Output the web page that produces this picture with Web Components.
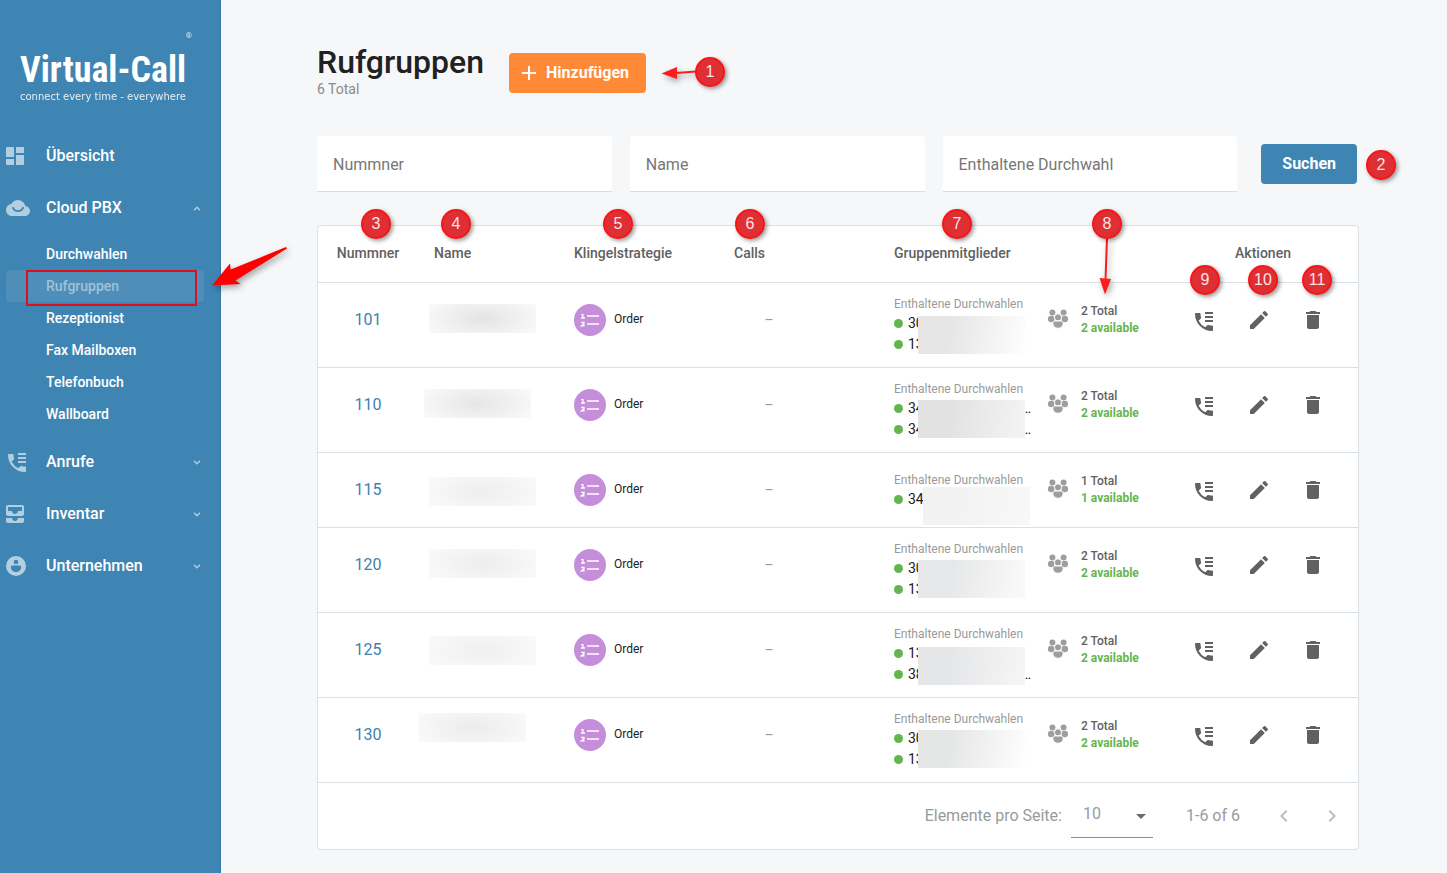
<!DOCTYPE html>
<html lang="de">
<head>
<meta charset="utf-8">
<meta name="viewport" content="width=device-width, initial-scale=1">
<title>Rufgruppen</title>
<style>
	body {
		margin: 0;
		font-family: Roboto, "Liberation Sans", sans-serif;
		background: #f5f7f9;
		color: #212121;
	}
</style>
</head>
<body>
<pbx-app>
	<pbx-sidebar slot="side">
		<nav-item icon="dashboard">Übersicht</nav-item>
		<nav-item icon="cloud" open>Cloud PBX
			<nav-link slot="sub">Durchwahlen</nav-link>
			<nav-link slot="sub" active>Rufgruppen</nav-link>
			<nav-link slot="sub">Rezeptionist</nav-link>
			<nav-link slot="sub">Fax Mailboxen</nav-link>
			<nav-link slot="sub">Telefonbuch</nav-link>
			<nav-link slot="sub">Wallboard</nav-link>
		</nav-item>
		<nav-item icon="phone" closed>Anrufe</nav-item>
		<nav-item icon="inbox" closed>Inventar</nav-item>
		<nav-item icon="account" closed>Unternehmen</nav-item>
	</pbx-sidebar>
	<page-header total="6 Total">Rufgruppen</page-header>
	<search-bar>
		<search-field>Nummner</search-field>
		<search-field>Name</search-field>
		<search-field>Enthaltene Durchwahl</search-field>
	</search-bar>
	<group-table></group-table>
	<note-layer slot="notes">
		<note-badge x="710" y="72">1</note-badge>
		<note-badge x="1381" y="165">2</note-badge>
		<note-badge x="376" y="224">3</note-badge>
		<note-badge x="456" y="224">4</note-badge>
		<note-badge x="618" y="224">5</note-badge>
		<note-badge x="750" y="224">6</note-badge>
		<note-badge x="957" y="224">7</note-badge>
		<note-badge x="1107" y="224">8</note-badge>
		<note-badge x="1205" y="280">9</note-badge>
		<note-badge x="1263" y="280">10</note-badge>
		<note-badge x="1317" y="280">11</note-badge>
	</note-layer>
</pbx-app>

<script>
const PHONE = `
	<path d="M20 15.5c-1.25 0-2.45-.2-3.57-.57a1.02 1.02 0 0 0-1.02.24l-2.2 2.2a15.05 15.05 0 0 1-6.59-6.59l2.2-2.21c.28-.26.36-.65.25-1A11.4 11.4 0 0 1 8.5 4c0-.55-.45-1-1-1H4c-.55 0-1 .45-1 1 0 9.39 7.61 17 17 17 .55 0 1-.45 1-1v-3.5c0-.55-.45-1-1-1z"/>
	<path d="M13 2h8v2h-8zM13 6h8v2h-8zM13 10h8v2h-8z"/>`;

// name: [viewBox x, y, width, height, shapes]
const ICONS = {
	dashboard: [3, 3, 18, 18, `<path d="M4 3h6a1 1 0 0 1 1 1v9H3V4a1 1 0 0 1 1-1zM3 15h8v6H4a1 1 0 0 1-1-1zM13 3h7a1 1 0 0 1 1 1v5h-8zM13 11h8v9a1 1 0 0 1-1 1h-7z"/>`],
	cloud: [0, 0, 24, 24, `
		<path d="M19.35 10.04A7.49 7.49 0 0 0 12 4C9.11 4 6.6 5.64 5.35 8.04A5.994 5.994 0 0 0 0 14c0 3.31 2.69 6 6 6h13c2.76 0 5-2.24 5-5 0-2.64-2.05-4.78-4.65-4.96z"/>
		<path d="M6.2 12h1.6M16.2 12h1.6M7.4 12.4c1.7 3.600 7.500 3.600 9.200 0" fill="none" stroke="#3f85b3" stroke-width="1.8"/>
		<circle cx="9.2" cy="11.6" r="1"/><circle cx="14.8" cy="11.6" r="1"/>`],
	phone: [1, 1, 20, 21, PHONE],
	call: [1, -2, 24, 24, PHONE],
	inbox: [3, 3, 18, 18, `<path d="M19 3H5c-1.1 0-2 .9-2 2v7c0 1.1.9 2 2 2h14c1.1 0 2-.9 2-2V5c0-1.1-.9-2-2-2zm0 6h-4c0 1.62-1.38 3-3 3s-3-1.38-3-3H5V5h14v4zm-4 7h6v3c0 1.1-.9 2-2 2H5c-1.1 0-2-.9-2-2v-3h6c0 1.66 1.34 3 3 3s3-1.34 3-3z"/>`],
	account: [2, 2, 20, 20, `
		<circle cx="12" cy="12" r="10"/>
		<g fill="#3f85b3"><circle cx="12" cy="8" r="2.3"/><path d="M8.5 11.5h7c1 0 1.6.7 1.6 1.7a5.1 5.1 0 0 1-10.2 0c0-1 .6-1.7 1.6-1.7z"/></g>`],
	down: [0, 0, 8, 5, `<path d="M1 .8l3 3 3-3" fill="none" stroke="currentColor" stroke-width="1.4"/>`],
	up: [0, 0, 8, 5, `<path d="M1 4.2l3-3 3 3" fill="none" stroke="currentColor" stroke-width="1.4"/>`],
	plus: [5, 5, 14, 14, `<path d="M19 13h-6v6h-2v-6H5v-2h6V5h2v6h6z"/>`],
	edit: [0, 0, 24, 24, `<path d="M3 17.25V21h3.75L17.81 9.94l-3.75-3.75L3 17.25zM20.71 7.04a1 1 0 0 0 0-1.41l-2.34-2.34a1 1 0 0 0-1.41 0l-1.83 1.83 3.75 3.75 1.83-1.83z"/>`],
	trash: [0, 0, 24, 24, `<path d="M6 19c0 1.1.9 2 2 2h8c1.1 0 2-.9 2-2V7H6v12zM19 4h-3.5l-1-1h-5l-1 1H5v2h14V4z"/>`],
	people: [0, 1, 20, 20, `
		<circle cx="4.4" cy="3.4" r="3"/><circle cx="15.6" cy="3.4" r="3"/>
		<circle cx="3.2" cy="10" r="3.3"/><circle cx="16.8" cy="10" r="3.3"/>
		<g stroke="#fff"><circle cx="10" cy="8.4" r="3.6"/><path d="M7.4 12h5.2c1.6 0 2.6 1 2.6 2.3 0 3-2.2 5-5.2 5s-5.2-2-5.2-5c0-1.3 1-2.3 2.6-2.3z"/></g>`],
	prev: [8, 6, 8, 12, `<path d="M15.41 7.41L14 6l-6 6 6 6 1.41-1.41L10.83 12z"/>`],
	next: [8, 6, 8, 12, `<path d="M10 6L8.59 7.41 13.17 12l-4.58 4.59L10 18l6-6z"/>`]
};

function icon(name) {
	const [x, y, w, h, body] = ICONS[name];
	return `<svg width="${w}" height="${h}" viewBox="${x} ${y} ${w} ${h}" fill="currentColor" overflow="visible" aria-hidden="true">${body}</svg>`;
}

function shadow(el, html) {
	el.attachShadow({ mode: "open" }).innerHTML = html;
}

class PbxApp extends HTMLElement {
	constructor() {
		super();
		shadow(this, `
			<style>
				:host { display: grid; grid-template-columns: 221px 1fr; min-height: 100vh; position: relative; }
				main { padding: 43px 88px 23px 96px; min-width: 0; }
			</style>
			<slot name="side"></slot>
			<main><slot></slot></main>
			<slot name="notes"></slot>
		`);
	}
}

// =========================
// SIDEBAR
// =========================

class PbxSidebar extends HTMLElement {
	constructor() {
		super();
		shadow(this, `
			<style>
				:host { display: block; box-sizing: border-box; background: #3f85b3; border-right: 1px solid #3479a8; color: #fff; }
				.logo { display: grid; height: 130px; padding: 30px 28px 0 20px; box-sizing: border-box; align-content: start; }
				.reg { justify-self: end; font-size: 8px; line-height: 12px; opacity: .8; }
				.name { font: bold 36px/42px "Roboto Condensed", "Liberation Sans Narrow", "DejaVu Sans Condensed", sans-serif; white-space: nowrap; padding-top: 7px; }
				.claim { font: 10px/12px "DejaVu Sans", sans-serif; white-space: nowrap; opacity: .85; }
			</style>
			<div class="logo">
				<span class="reg">®</span>
				<span class="name">Virtual-Call</span>
				<span class="claim">connect every time - everywhere</span>
			</div>
			<nav><slot></slot></nav>
		`);
	}
}

class NavItem extends HTMLElement {
	constructor() {
		super();
		const open = this.hasAttribute("open");
		const arrow = open ? icon("up") : this.hasAttribute("closed") ? icon("down") : "";
		shadow(this, `
			<style>
				:host { display: block; }
				button {
					display: flex; align-items: center; width: 100%; height: 52px;
					padding: 0 19px 0 6px; border: 0; background: none;
					color: inherit; font: 500 16px/20px Roboto, sans-serif; text-align: left; cursor: pointer;
				}
				.icon { display: flex; flex: 0 0 40px; color: #b2cfe2; }
				.label { flex: 1; }
				.arrow { display: flex; padding-top: 1px; color: #b2cfe2; }
				.sub { padding: 4px 16px 6px 6px; }
			</style>
			<button type="button">
				<span class="icon">${icon(this.getAttribute("icon"))}</span>
				<span class="label"><slot></slot></span>
				<span class="arrow">${arrow}</span>
			</button>
			${open ? `<div class="sub"><slot name="sub"></slot></div>` : ""}
		`);
	}
}

class NavLink extends HTMLElement {
	constructor() {
		super();
		shadow(this, `
			<style>
				:host { display: block; }
				a { display: block; padding-left: 40px; border-radius: 4px; font-size: 14px; font-weight: 500; line-height: 32px; color: #fff; text-decoration: none; }
				:host([active]) a { background: rgba(255, 255, 255, .08); color: #a0c2da; }
			</style>
			<a href="#"><slot></slot></a>
		`);
	}
}

// =========================
// HEADER + SEARCH
// =========================

class PageHeader extends HTMLElement {
	constructor() {
		super();
		shadow(this, `
			<style>
				:host { display: flex; align-items: flex-start; gap: 25px; height: 93px; }
				h1 { margin: 0; font-size: 32px; font-weight: 500; line-height: 38px; }
				p { margin: 0; font-size: 14px; line-height: 16px; color: #8a8a8a; }
				button {
					display: flex; align-items: center; gap: 10px; height: 40px; margin-top: 10px; padding: 0 17px 0 13px;
					border: 0; border-radius: 4px; background: #ff8937; color: #fff; font: 700 16px/20px Roboto, sans-serif; cursor: pointer;
				}
			</style>
			<div>
				<h1><slot></slot></h1>
				<p>${this.getAttribute("total")}</p>
			</div>
			<button type="button">${icon("plus")}Hinzufügen</button>
		`);
	}
}

class SearchBar extends HTMLElement {
	constructor() {
		super();
		shadow(this, `
			<style>
				:host { display: block; }
				form { display: flex; align-items: center; gap: 24px; padding-right: 2px; margin-bottom: 33px; }
				.fields { flex: 1; display: grid; grid-template-columns: repeat(3, 1fr); gap: 18px; }
				button { height: 40px; padding: 0 21px; border: 0; border-radius: 4px; background: #3f85b3; color: #fff; font: 700 16px/20px Roboto, sans-serif; cursor: pointer; }
			</style>
			<form>
				<div class="fields"><slot></slot></div>
				<button type="button">Suchen</button>
			</form>
		`);
	}
}

class SearchField extends HTMLElement {
	constructor() {
		super();
		shadow(this, `
			<style>
				:host { display: grid; align-items: center; height: 55px; background: #fff; border-bottom: 1px solid #d8dde3; border-radius: 4px 4px 0 0; }
				label, input { grid-area: 1 / 1; }
				label { padding: 2px 16px 0; font-size: 16px; line-height: 20px; color: #777; pointer-events: none; }
				input { box-sizing: border-box; width: 100%; height: 100%; padding: 0 16px; border: 0; outline: 0; background: none; font: 16px/20px Roboto, sans-serif; }
				input:not(:placeholder-shown) + label { visibility: hidden; }
			</style>
			<input id="q" type="text" placeholder=" ">
			<label for="q"><slot></slot></label>
		`);
	}
}

// =========================
// TABLE
// =========================

// patch: left, top and tone over the name; list: the same over the extensions
const GROUPS = [
	{ nr: 101, ext: ["30", "13"], patch: [11, 21, "#e4e4e4"], list: [24, 33, "#e6e6e6", "#fefefe"] },
	{ nr: 110, ext: ["34", "34"], patch: [6, 21, "#e6e6e6"], list: [24, 32, "#e2e2e2", "#f4f4f4"], dots: [1, 1] },
	{ nr: 115, ext: ["34"], patch: [11, 24, "#eeeeee"], list: [29, 34, "#f2f2f2", "#f8f8f8"] },
	{ nr: 120, ext: ["30", "13"], patch: [11, 21, "#ededed"], list: [24, 32, "#e6e7e8", "#fafafa"] },
	{ nr: 125, ext: ["13", "38"], patch: [11, 23, "#efefef"], list: [24, 34, "#e5e6e8", "#f6f6f6"], dots: [0, 1] },
	{ nr: 130, ext: ["30", "13"], patch: [1, 15, "#ececec"], list: [24, 32, "#e5e6e6", "#fefefe"] }
];

class BlurPatch extends HTMLElement {
	constructor() {
		super();
		shadow(this, `
			<style>
				:host { display: block; position: absolute; width: 107px; height: 29px; background: radial-gradient(ellipse 60% 90% at 50% 50%, var(--dark), #fafafa); }
				:host([tall]) { height: 38px; background: linear-gradient(100deg, var(--dark) 30%, var(--light)); }
			</style>
		`);
	}
}

class GroupTable extends HTMLElement {
	constructor() {
		super();
		shadow(this, `
			<style>
				:host { display: block; background: #fff; border: 1px solid #dbe0e6; border-radius: 4px; }
				table { width: 100%; table-layout: fixed; border-collapse: separate; border-spacing: 0; }
				th { height: 57px; padding: 0 16px 2px; box-sizing: border-box; border-bottom: 1px solid #d9e0e7; font-size: 14px; font-weight: 500; line-height: 20px; color: #616161; text-align: left; white-space: nowrap; }
				th.center { text-align: center; padding: 0 0 2px; }
				td { padding: 0; vertical-align: top; border-bottom: 1px solid #d9e0e7; position: relative; }
				.cell { display: flex; align-items: center; height: 74px; padding-left: 16px; }
				.nr { justify-content: center; padding: 0; }
				a { font-size: 16px; line-height: 20px; color: #3f7fae; text-decoration: none; }
				.order { gap: 8px; font-size: 12px; line-height: 20px; color: #212121; }
				.order span { padding-bottom: 3px; }
				.round { width: 32px; height: 32px; }
				.dash { width: 70px; text-align: center; font-size: 14px; color: #9a9a9a; }
				.split { display: flex; }
				.members { box-sizing: border-box; width: 154px; padding: 13px 0 12px; margin-left: 16px; }
				.members p { margin: 0; font-size: 12px; line-height: 17px; color: #9a9a9a; }
				.one .members { padding: 19px 0 17px; }
				ul { margin: 0; padding: 0; list-style: none; }
				li { display: flex; align-items: center; gap: 5px; width: 137px; font-size: 14px; line-height: 21px; color: #212121; }
				li::before { content: ""; width: 9px; height: 9px; border-radius: 50%; background: #65b54f; }
				li i { margin-left: auto; font-style: normal; }
				.people { display: flex; align-items: center; gap: 13px; height: 74px; color: #9e9e9e; }
				.count { font-size: 12px; font-weight: 500; line-height: 17px; color: #616161; }
				.count b { display: block; font-weight: 700; color: #65b54f; }
				.actions { gap: 30px; padding-left: 25px; }
				.actions button { display: flex; padding: 0; border: 0; background: none; color: #616161; cursor: pointer; }
				.foot { display: flex; justify-content: flex-end; align-items: center; height: 66px; padding-right: 14px; font-size: 16px; line-height: 20px; color: #9a9a9a; }
				.select { position: relative; display: flex; margin: 0 33px 0 9px; }
				select { appearance: none; width: 82px; height: 44px; padding: 0 12px 3px; border: 0; border-bottom: 1px solid #8c8c8c; border-radius: 0; background: none; font: 16px/20px Roboto, sans-serif; color: #9a9a9a; }
				.select::after { content: ""; position: absolute; right: 7px; top: 20px; border: 5px solid transparent; border-top-color: #6b6b6b; border-bottom: 0; pointer-events: none; }
				.pager { display: flex; gap: 24px; margin-left: 32px; }
				.pager button { display: flex; justify-content: center; align-items: center; width: 24px; height: 24px; padding: 0; border: 0; background: none; color: #bdbdbd; }
			</style>
			<table>
				<colgroup>
					<col style="width: 100px"><col style="width: 140px"><col style="width: 160px"><col style="width: 160px"><col><col style="width: 190px">
				</colgroup>
				<thead>
					<tr>
						<th class="center">Nummner</th><th>Name</th><th>Klingelstrategie</th><th>Calls</th><th>Gruppenmitglieder</th><th class="center">Aktionen</th>
					</tr>
				</thead>
				<tbody>${GROUPS.map((g) => this._row(g)).join("")}</tbody>
			</table>
			<div class="foot">
				<label for="size">Elemente pro Seite:</label>
				<span class="select"><select id="size"><option>10</option><option>25</option></select></span>
				<span>1-6 of 6</span>
				<span class="pager">
					<button type="button" aria-label="Zurück">${icon("prev")}</button>
					<button type="button" aria-label="Weiter">${icon("next")}</button>
				</span>
			</div>
		`);
	}

	_row(g) {
		const n = g.ext.length;
		const items = g.ext.map((e, i) => `<li>${e}${g.dots && g.dots[i] ? "<i>…</i>" : ""}</li>`).join("");
		const [nx, ny, nc] = g.patch;
		const [lx, ly, dark, light] = g.list;

		return `
			<tr class="${n === 1 ? "one" : ""}">
				<td><div class="cell nr"><a href="#">${g.nr}</a></div></td>
				<td><blur-patch style="left: ${nx}px; top: ${ny}px; --dark: ${nc}"></blur-patch></td>
				<td><div class="cell order">${this._orderIcon()}<span>Order</span></div></td>
				<td><div class="cell"><span class="dash">–</span></div></td>
				<td>
					<div class="split">
						<div class="members"><p>Enthaltene Durchwahlen</p><ul>${items}</ul></div>
						<div class="people">${icon("people")}<div class="count">${n} Total<b>${n} available</b></div></div>
					</div>
					<blur-patch tall style="left: ${lx + 16}px; top: ${ly}px; --dark: ${dark}; --light: ${light}"></blur-patch>
				</td>
				<td>
					<div class="cell actions">
						<button type="button" aria-label="Anrufliste">${icon("call")}</button>
						<button type="button" aria-label="Bearbeiten">${icon("edit")}</button>
						<button type="button" aria-label="Löschen">${icon("trash")}</button>
					</div>
				</td>
			</tr>`;
	}

	_orderIcon() {
		return `
			<svg class="round" viewBox="0 0 32 32" aria-hidden="true">
				<circle cx="16" cy="16" r="16" fill="#c48edb"/>
				<path d="M13 12h12M13 20h12" stroke="#fff" stroke-width="1.6"/>
				<path d="M7.2 10.6h1.7v3.4M7 14h4M7.2 18.5h2.8v1.5l-2.5 1.8h3.2" fill="none" stroke="#fff" stroke-width="1.3"/>
			</svg>`;
	}
}

// =========================
// ANNOTATIONS
// =========================

class NoteLayer extends HTMLElement {
	constructor() {
		super();
		shadow(this, `
			<style>
				:host { position: absolute; inset: 0; overflow: hidden; pointer-events: none; }
				svg { position: absolute; left: 0; top: 0; filter: drop-shadow(2px 3px 3px rgba(0, 0, 0, .35)); }
				.frame { position: absolute; left: 26px; top: 270px; box-sizing: border-box; width: 171px; height: 36px; border: 2px solid #dc0f1c; }
			</style>
			<div class="frame"></div>
			<svg width="1447" height="320" aria-hidden="true">
				<path d="M212 285.5L230 263.5 230.7 269.5 286 247 287 248.5 235.5 280.5 240.7 284z" fill="#f00"/>
				<g fill="#fb1d1d" stroke="#fb1d1d">
					<path d="M696 71.5L676 73" stroke-width="2"/><path d="M661.5 73.5L677 67v12z" stroke="none"/>
					<path d="M1107 238L1105.5 280" stroke-width="2"/><path d="M1105 294.5L1099.5 278l11.5 1z" stroke="none"/>
				</g>
			</svg>
			<slot></slot>
		`);
	}
}

class NoteBadge extends HTMLElement {
	constructor() {
		super();
		shadow(this, `
			<style>
				:host {
					position: absolute; box-sizing: border-box; width: 30px; height: 30px; transform: translate(-50%, -50%);
					border: 2px solid #fb1414; border-radius: 50%; background: #de3034; box-shadow: 2px 2px 4px rgba(0, 0, 0, .4);
					color: #fbe3e3; font: 16px/26px "Liberation Sans", sans-serif; text-align: center;
				}
			</style>
			<slot></slot>
		`);
	}

	connectedCallback() {
		this.style.left = `${this.getAttribute("x")}px`;
		this.style.top = `${this.getAttribute("y")}px`;
	}
}

customElements.define("blur-patch", BlurPatch);
customElements.define("nav-link", NavLink);
customElements.define("nav-item", NavItem);
customElements.define("pbx-sidebar", PbxSidebar);
customElements.define("page-header", PageHeader);
customElements.define("search-field", SearchField);
customElements.define("search-bar", SearchBar);
customElements.define("group-table", GroupTable);
customElements.define("note-badge", NoteBadge);
customElements.define("note-layer", NoteLayer);
customElements.define("pbx-app", PbxApp);
</script>
</body>
</html>
